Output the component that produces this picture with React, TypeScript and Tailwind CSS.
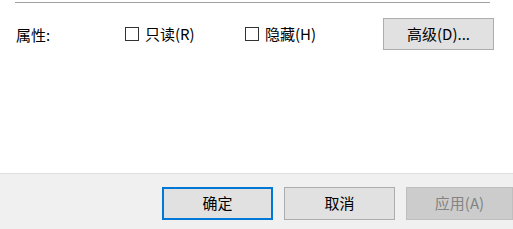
const font = { fontFamily: '"Noto Sans CJK SC", "Noto Sans", sans-serif' };

function CheckItem({ label }: { label: string }) {
    return (
        <label className="flex items-center gap-[6px] text-[15px] text-black">
            <span className="w-[14px] h-[14px] border border-[#333333] bg-white"></span>
            <span>{label}</span>
        </label>
    );
}

export default function App() {
    return (
        <div
            className="w-[513px] h-[229px] bg-white flex flex-col overflow-hidden font-['Noto_Sans_CJK_SC',sans-serif]"
            style={font}
        >
            {/* 分隔线 */}
            <div className="mt-[2px] ml-[15px] w-[475px] h-px bg-[#a0a0a0]"></div>

            {/* 属性行 */}
            <div className="mt-[15px] flex items-center h-[32px] pl-[16px]">
                <span className="w-[109px] text-[15px] text-black leading-none">属性:</span>
                <div className="w-[120px]">
                    <CheckItem label="只读(R)" />
                </div>
                <div className="w-[138px]">
                    <CheckItem label="隐藏(H)" />
                </div>
                <button className="w-[111px] h-[32px] border border-[#adadad] bg-[#e1e1e1] text-[15px] text-black">
                    高级(D)...
                </button>
            </div>

            <div className="flex-1"></div>

            {/* 底部按钮 */}
            <div className="h-[56px] bg-[#f0f0f0] border-t border-[#dfdfdf] flex items-start pt-[13px] pl-[162px] gap-[11px]">
                <button className="w-[111px] h-[33px] shrink-0 border-2 border-[#0078d7] bg-[#e1e1e1] text-[15px] text-black">
                    确定
                </button>
                <button className="w-[111px] h-[33px] shrink-0 border border-[#adadad] bg-[#e1e1e1] text-[15px] text-black">
                    取消
                </button>
                <button className="w-[107px] h-[33px] shrink-0 border border-[#bfbfbf] bg-[#cccccc] text-[15px] text-[#838383]">
                    应用(A)
                </button>
            </div>
        </div>
    );
}
